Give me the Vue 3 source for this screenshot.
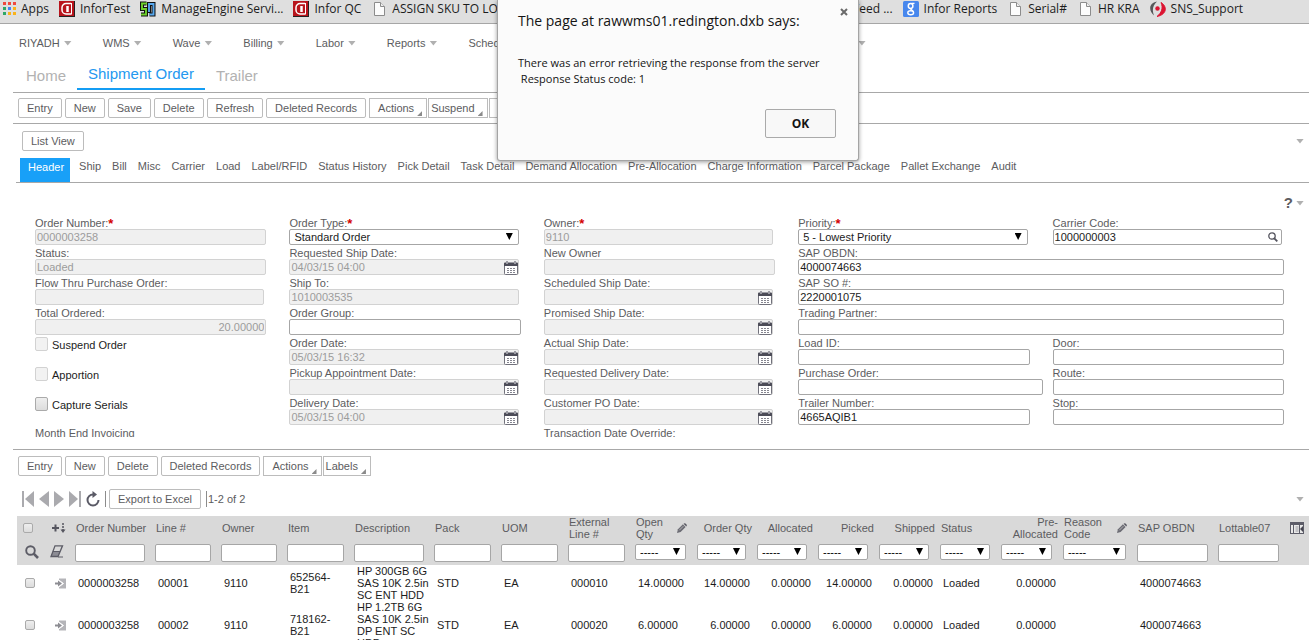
<script setup>
const leftBookmarks = [
  { icon: 'apps', text: 'Apps' },
  { icon: 'infor', text: 'InforTest' },
  { icon: 'engine', text: 'ManageEngine Servi...' },
  { icon: 'infor', text: 'Infor QC' },
  { icon: 'page', text: 'ASSIGN SKU TO LO...' },
]
const rightBookmarks = [
  { icon: 'none', text: 'Feed ...' },
  { icon: 'google', text: 'Infor Reports' },
  { icon: 'page', text: 'Serial#' },
  { icon: 'page', text: 'HR KRA' },
  { icon: 'sns', text: 'SNS_Support' },
]
const appGrid = [
  '#f04a3e', '#f04a3e', '#f04a3e',
  '#2fa866', '#4285f4', '#f9b31b',
  '#2fa866', '#f9b31b', '#f9b31b',
]

const menus = ['RIYADH', 'WMS', 'Wave', 'Billing', 'Labor', 'Reports', 'Scheduler']
const orderTools = ['Entry', 'New', 'Save', 'Delete', 'Refresh', 'Deleted Records']
const lineTools = ['Entry', 'New', 'Delete', 'Deleted Records']
const detailTabs = [
  'Header', 'Ship', 'Bill', 'Misc', 'Carrier', 'Load', 'Label/RFID', 'Status History',
  'Pick Detail', 'Task Detail', 'Demand Allocation', 'Pre-Allocation', 'Charge Information',
  'Parcel Package', 'Pallet Exchange', 'Audit',
]

const fields = [
  { label: 'Order Number:', value: '0000003258', off: true, req: true, pad: true },
  { label: 'Order Type:', value: 'Standard Order', kind: 'select', req: true },
  { label: 'Owner:', value: '9110', off: true, req: true, size: 'short' },
  { label: 'Priority:', value: '5 - Lowest Priority', kind: 'select', req: true },
  { label: 'Carrier Code:', value: '1000000003', kind: 'lookup', size: 'short' },

  { label: 'Status:', value: 'Loaded', off: true },
  { label: 'Requested Ship Date:', value: '04/03/15 04:00', off: true, kind: 'date' },
  { label: 'New Owner', value: '', off: true },
  { label: 'SAP OBDN:', value: '4000074663', span: true },

  { label: 'Flow Thru Purchase Order:', value: '', off: true, size: 'short' },
  { label: 'Ship To:', value: '1010003535', off: true, size: 'short' },
  { label: 'Scheduled Ship Date:', value: '', off: true, kind: 'date' },
  { label: 'SAP SO #:', value: '2220001075', span: true },

  { label: 'Total Ordered:', value: '20.00000', off: true, right: true },
  { label: 'Order Group:', value: '' },
  { label: 'Promised Ship Date:', value: '', off: true, kind: 'date' },
  { label: 'Trading Partner:', value: '', span: true },

  { label: 'Suspend Order', kind: 'check', off: true },
  { label: 'Order Date:', value: '05/03/15 16:32', off: true, kind: 'date' },
  { label: 'Actual Ship Date:', value: '', off: true, kind: 'date' },
  { label: 'Load ID:', value: '' },
  { label: 'Door:', value: '' },

  { label: 'Apportion', kind: 'check', off: true },
  { label: 'Pickup Appointment Date:', value: '', off: true, kind: 'date' },
  { label: 'Requested Delivery Date:', value: '', off: true, kind: 'date' },
  { label: 'Purchase Order:', value: '', size: 'long' },
  { label: 'Route:', value: '' },

  { label: 'Capture Serials', kind: 'check' },
  { label: 'Delivery Date:', value: '05/03/15 04:00', off: true, kind: 'date' },
  { label: 'Customer PO Date:', value: '', off: true, kind: 'date' },
  { label: 'Trailer Number:', value: '4665AQIB1' },
  { label: 'Stop:', value: '' },

  { label: 'Month End Invoicing', value: '' },
  { kind: 'blank' },
  { label: 'Transaction Date Override:', value: '', off: true, kind: 'date' },
]

const columns = [
  { key: 'order', label: 'Order Number', w: 80 },
  { key: 'line', label: 'Line #', w: 66 },
  { key: 'owner', label: 'Owner', w: 66 },
  { key: 'item', label: 'Item', w: 67 },
  { key: 'desc', label: 'Description', w: 80 },
  { key: 'pack', label: 'Pack', w: 67 },
  { key: 'uom', label: 'UOM', w: 67 },
  { key: 'ext', label: 'External\nLine #', w: 67 },
  { key: 'open', label: 'Open\nQty', w: 62, pick: true, edit: true },
  { key: 'qty', label: 'Order Qty', w: 60, pick: true, num: true },
  { key: 'alloc', label: 'Allocated', w: 61, pick: true, num: true },
  { key: 'picked', label: 'Picked', w: 61, pick: true, num: true },
  { key: 'shipped', label: 'Shipped', w: 61, pick: true, num: true },
  { key: 'status', label: 'Status', w: 61, pick: true },
  { key: 'pre', label: 'Pre-\nAllocated', w: 62, pick: true, num: true },
  { key: 'reason', label: 'Reason\nCode', w: 74, pick: true, edit: true },
  { key: 'sap', label: 'SAP OBDN', w: 81 },
  { key: 'lot', label: 'Lottable07', w: 71 },
]
const widths = [29, 28, ...columns.map((c) => c.w), 21]
const total = widths.reduce((a, b) => a + b, 0)

const rows = [
  {
    order: '0000003258', line: '00001', owner: '9110', item: '652564-\nB21',
    desc: 'HP 300GB 6G\nSAS 10K 2.5in\nSC ENT HDD', pack: 'STD', uom: 'EA', ext: '000010',
    open: '14.00000', qty: '14.00000', alloc: '0.00000', picked: '14.00000', shipped: '0.00000',
    status: 'Loaded', pre: '0.00000', reason: '', sap: '4000074663', lot: '',
  },
  {
    order: '0000003258', line: '00002', owner: '9110', item: '718162-\nB21',
    desc: 'HP 1.2TB 6G\nSAS 10K 2.5in\nDP ENT SC\nHDD', pack: 'STD', uom: 'EA', ext: '000020',
    open: '6.00000', qty: '6.00000', alloc: '0.00000', picked: '6.00000', shipped: '0.00000',
    status: 'Loaded', pre: '0.00000', reason: '', sap: '4000074663', lot: '',
  },
]
</script>

<template>
  <div class="screen">
    <nav class="bookmarks" aria-label="Bookmarks">
      <div v-for="(group, g) in [leftBookmarks, rightBookmarks]" :key="g" class="bm-group">
        <a v-for="(b, i) in group" :key="i" href="#" class="bm">
          <svg v-if="b.icon === 'apps'" class="bm-icon apps" viewBox="0 0 13 13">
            <rect v-for="(c, n) in appGrid" :key="n" :x="(n % 3) * 5" :y="Math.floor(n / 3) * 5" width="3" height="3" :fill="c" />
          </svg>
          <svg v-else-if="b.icon === 'infor'" class="bm-icon" viewBox="0 0 16 16">
            <rect width="16" height="16" fill="#222" />
            <rect width="15" height="15" fill="#b8141c" />
            <path d="M12 2.500H7a4 4 0 0 0-4 4v2.500a4 4 0 0 0 4 4h5" fill="none" stroke="#fff" stroke-width="1.500" />
            <path d="M8.500 5v6" stroke="#fff" stroke-width="2.500" />
            <path d="M12.500 2v11.500" stroke="#fff" stroke-width="1" />
          </svg>
          <svg v-else-if="b.icon === 'engine'" class="bm-icon" viewBox="0 0 16 16">
            <path d="M6.500 2.500H2V8h4v5.500H1" fill="none" stroke="#111" stroke-width="4" />
            <path d="M9 12V3h4.500v10.500H9.500" fill="none" stroke="#111" stroke-width="4" />
            <path d="M7 2.500H2V8h4v5.500H1" fill="none" stroke="#6fd02c" stroke-width="1.900" />
            <path d="M9 11V3h4.500v10.500H9.500" fill="none" stroke="#58a8ee" stroke-width="1.900" />
          </svg>
          <svg v-else-if="b.icon === 'page'" class="bm-icon" viewBox="0 0 16 16">
            <path d="M3.500 1.500h6l4 4v9h-10z" fill="#fcfcfc" stroke="#8c8c8c" />
            <path d="M9.500 1.500v4h4" fill="#eee" stroke="#8c8c8c" />
          </svg>
          <svg v-else-if="b.icon === 'google'" class="bm-icon" viewBox="0 0 16 16">
            <rect width="16" height="16" rx="1.500" fill="#4787ed" />
            <ellipse cx="7.600" cy="5" rx="2.300" ry="2.400" fill="none" stroke="#fff" stroke-width="1.500" />
            <path d="M8.500 2.300h3M8.200 7.200c-2 1.200 1.800 1.600 2 3.600" fill="none" stroke="#fff" stroke-width="1.300" />
            <ellipse cx="7.700" cy="11.700" rx="2.900" ry="2" fill="none" stroke="#fff" stroke-width="1.400" />
          </svg>
          <svg v-else-if="b.icon === 'sns'" class="bm-icon" viewBox="0 0 16 16">
            <path d="M7 .500C-1.500 2-1.500 10 4 14.500C1.800 9 2.800 4.500 7 .500z" fill="#55585a" />
            <path d="M11 1.500c6.500 4 6 12-4 14c4.500-3.500 6.500-8.500 4-14z" fill="#dc1432" stroke="#dc1432" />
            <circle cx="7.500" cy="7.500" r="2.200" fill="#dc1432" />
          </svg>
          <span>{{ b.text }}</span>
        </a>
      </div>
    </nav>

    <nav class="menu" aria-label="Main menu">
      <button v-for="m in menus" :key="m" type="button">{{ m }}<i class="caret"></i></button>
      <button type="button" class="menu-more" aria-label="More"><i class="caret"></i></button>
    </nav>

    <main class="page">
      <nav class="tabs" aria-label="Screens">
        <a href="#">Home</a>
        <a href="#" class="on">Shipment Order</a>
        <a href="#">Trailer</a>
      </nav>

      <div class="toolbar">
        <button v-for="t in orderTools" :key="t" type="button" class="btn">{{ t }}</button>
        <div class="drops">
          <button type="button" class="drop">Actions<i></i></button>
          <button type="button" class="drop">Suspend<i></i></button>
          <button type="button" class="drop last">Print<i></i></button>
        </div>
      </div>

      <div class="view-row">
        <button type="button" class="btn">List View</button>
        <i class="caret"></i>
      </div>

      <nav class="detail-tabs" aria-label="Order details">
        <a v-for="(t, i) in detailTabs" :key="t" href="#" :class="{ on: i === 0 }">{{ t }}</a>
      </nav>

      <div class="help"><b>?</b><i class="caret"></i></div>

      <form class="form" @submit.prevent>
        <div v-for="(f, i) in fields" :key="i" class="field" :class="[f.kind, f.size, { span: f.span }]">
          <template v-if="f.kind === 'check'">
            <input :id="'f' + i" type="checkbox" class="big" :disabled="f.off" />
            <label :for="'f' + i">{{ f.label }}</label>
          </template>
          <template v-else-if="f.kind !== 'blank'">
            <label :for="'f' + i">{{ f.label }}<sup v-if="f.req">*</sup></label>
            <div class="control">
              <select v-if="f.kind === 'select'" :id="'f' + i"><option>{{ f.value }}</option></select>
              <input v-else :id="'f' + i" type="text" :value="f.value" :disabled="f.off" :class="{ right: f.right }" />
              <svg v-if="f.kind === 'date'" class="cal" viewBox="0 0 14 14">
                <path d="M.500 4v8.500a1 1 0 0 0 1 1h11a1 1 0 0 0 1-1V4" fill="#fff" stroke="#71717b" />
                <path d="M0 5V2.500a1 1 0 0 1 1-1h12a1 1 0 0 1 1 1V5z" fill="#4c4c58" />
                <path d="M3 0v3M11 0v3M7 1v1" stroke="#9c9ca4" stroke-width="2" />
                <path d="M3 7.500h8M3 9.500h8M3 11.500h8" stroke="#85858f" stroke-width="1" stroke-dasharray="2 1" />
              </svg>
              <svg v-if="f.kind === 'lookup'" class="glass" viewBox="0 0 10 10">
                <circle cx="4" cy="4" r="3.200" fill="none" stroke="#55555f" stroke-width="1.300" />
                <path d="M6.300 6.300L9.300 9.300" stroke="#55555f" stroke-width="1.900" />
              </svg>
            </div>
          </template>
        </div>
      </form>

      <section class="lines">
        <div class="toolbar">
          <button v-for="t in lineTools" :key="t" type="button" class="btn">{{ t }}</button>
          <div class="drops">
            <button type="button" class="drop">Actions<i></i></button>
            <button type="button" class="drop">Labels<i></i></button>
          </div>
        </div>

        <div class="pager">
          <button type="button" aria-label="First"><svg width="12" height="16" viewBox="0 0 12 16"><path d="M1 0v16" stroke="#aaaaae" stroke-width="2" /><path d="M12 0v16L3 8z" fill="#aaaaae" /></svg></button>
          <button type="button" aria-label="Previous"><svg width="10" height="16" viewBox="0 0 10 16"><path d="M10 0v16L0 8z" fill="#aaaaae" /></svg></button>
          <button type="button" aria-label="Next"><svg width="10" height="16" viewBox="0 0 10 16"><path d="M0 0v16L10 8z" fill="#aaaaae" /></svg></button>
          <button type="button" aria-label="Last"><svg width="12" height="16" viewBox="0 0 12 16"><path d="M11 0v16" stroke="#aaaaae" stroke-width="2" /><path d="M0 0v16L9 8z" fill="#aaaaae" /></svg></button>
          <button type="button" aria-label="Refresh">
            <svg width="14" height="16" viewBox="0 0 14 16"><path d="M7 3.500A5.500 5.500 0 1 0 12.500 9" fill="none" stroke="#5a5a66" stroke-width="2" /><path d="M6.500 0L11 3.500L6.500 7z" fill="#5a5a66" /></svg>
          </button>
          <span class="bar"></span>
          <button type="button" class="btn">Export to Excel</button>
          <span class="bar"></span>
          <span class="count">1-2 of 2</span>
          <i class="caret"></i>
        </div>

        <table>
          <colgroup>
            <col v-for="(w, i) in widths" :key="i" :style="{ width: (w / total) * 100 + '%' }" />
          </colgroup>
          <thead>
            <tr class="titles">
              <th class="pick-all"><input type="checkbox" class="small" aria-label="Select all lines" /></th>
              <th class="sort">
                <svg width="14" height="12" viewBox="0 0 14 12"><path d="M0 6h7M3.500 2.500v7" stroke="#55555f" stroke-width="2" /><path d="M11 1v8" stroke="#55555f" stroke-width="1.500" stroke-dasharray="2 1" /><path d="M8.500 7.500h5L11 11z" fill="#55555f" /></svg>
              </th>
              <th v-for="c in columns" :key="c.key" :class="{ num: c.num }">
                <div class="title"><span>{{ c.label }}</span>
                  <svg v-if="c.edit" class="pencil" viewBox="0 0 11 11"><path d="M0 11l1-4L6.500 1.500 9.500 4.500 4 10z" fill="#6c6c74" /><path d="M7.200.800Q8.500-.300 10 1t.300 2.800z" fill="#55555f" /><path d="M2.500 8L7 3.500" stroke="#b8b8bc" /></svg>
                </div>
              </th>
              <th class="config">
                <svg width="14" height="12" viewBox="0 0 14 12"><rect x=".500" y=".500" width="13" height="11" fill="#e8e8e8" stroke="#5c5c68" /><path d="M0 1.500h14" stroke="#5c5c68" stroke-width="3" /><path d="M3.500 3v9M9.500 3v9" stroke="#5c5c68" /><path d="M5.500 5h3M5.500 7h3M5.500 9h3" stroke="#9a9aa2" /><path d="M13 4v6L10 7z" fill="#44444f" /></svg>
              </th>
            </tr>
            <tr class="filters">
              <th class="search">
                <svg width="14" height="14" viewBox="0 0 14 14"><circle cx="5.500" cy="5.500" r="4.300" fill="none" stroke="#5c5c66" stroke-width="1.900" /><path d="M8.700 8.700L13 13" stroke="#5c5c66" stroke-width="2.600" /></svg>
              </th>
              <th class="clear">
                <svg width="14" height="13" viewBox="0 0 14 13"><path d="M2.800 6.500h7.200L8 11.500H1z" fill="#8c8c94" /><path d="M5 .800h7.500L8 11.500H1z" fill="none" stroke="#5c5c66" stroke-width="1.300" /><path d="M3 6.500h7" stroke="#5c5c66" /><path d="M8 12h5" stroke="#5c5c66" /></svg>
              </th>
              <th v-for="c in columns" :key="c.key">
                <div v-if="c.pick" class="pick"><select :aria-label="c.label"><option>-----</option></select></div>
                <input v-else type="text" :aria-label="c.label" />
              </th>
              <th></th>
            </tr>
          </thead>
          <tbody>
            <tr v-for="(r, i) in rows" :key="i">
              <td class="tick"><input type="checkbox" class="small" :aria-label="'Select line ' + r.line" /></td>
              <td class="open">
                <svg width="11" height="11" viewBox="0 0 11 11"><path d="M4 .500h7v10H4z" fill="#b4b4b8" /><path d="M3 1.500L8.500 5.500L3 9.500z" fill="#fff" stroke="#fff" /><path d="M0 5.500h4" stroke="#8c8c92" stroke-width="2" /><path d="M3 2.500l4 3L3 8.500z" fill="#8c8c92" /></svg>
              </td>
              <td v-for="c in columns" :key="c.key" :class="{ num: c.num }">{{ r[c.key] }}</td>
              <td></td>
            </tr>
          </tbody>
        </table>
      </section>
    </main>

    <div class="dialog" role="alertdialog" aria-labelledby="dlg-title">
      <button type="button" class="close" aria-label="Close">
        <svg width="8" height="8" viewBox="0 0 8 8"><path d="M1 1l6 6M7 1L1 7" stroke="#6a6a6a" stroke-width="2" /></svg>
      </button>
      <h2 id="dlg-title">The page at rawwms01.redington.dxb says:</h2>
      <p>There was an error retrieving the response from the server<br />&nbsp;Response Status code: 1</p>
      <button type="button" class="ok">OK</button>
    </div>
  </div>
</template>

<style>
body { background: #fff; }
</style>

<style scoped>
* { box-sizing: border-box; }
.screen {
  position: relative;
  height: 100vh;
  overflow: hidden;
  font: 11px/12px "Liberation Sans", Arial, sans-serif;
  color: #5c5c60;
}
button, input, select { font: inherit; color: inherit; margin: 0; }
button { background: none; border: 0; padding: 0; }
a { color: inherit; text-decoration: none; }
svg { display: block; flex: none; }

.bookmarks {
  display: flex;
  height: 24px;
  padding: 0 3px 6px;
  background: #dfdfdf;
  border-bottom: 1px solid #a6a6a6;
  font: 12px/16px "Open Sans", "Noto Sans", sans-serif;
  color: #1c1c1c;
}
.bm-group { display: flex; align-items: center; gap: 10px; flex: 0 0 850px; }
.bm { display: flex; align-items: center; gap: 5px; white-space: nowrap; }
.bm-icon { width: 16px; height: 16px; }
.apps { width: 13px; height: 13px; }

.menu { display: flex; align-items: center; gap: 31px; height: 38px; padding-left: 19px; }
.menu button { display: flex; align-items: center; gap: 4px; }
.menu .menu-more { margin-left: 297px; }
.caret { display: block; width: 8px; height: 5px; background: #b0b0b0; clip-path: polygon(0 0, 100% 0, 50% 100%); }

.page { margin-left: 13px; }
.tabs { display: flex; height: 31px; padding-left: 2px; border-bottom: 1px solid #a8a8a8; font-size: 15px; line-height: 28px; color: #b2b2b2; }
.tabs a { height: 28px; padding: 0 11px; }
.tabs a.on { line-height: 24px; color: #2498f0; border-bottom: 2px solid #149df4; }

.toolbar { display: flex; align-items: center; gap: 3px; height: 31px; padding-left: 5px; border-bottom: 1px solid #a8a8a8; }
.btn { height: 20px; padding: 0 8px; border: 1px solid #bcbcbc; border-radius: 2px; background: #fff; white-space: nowrap; }
.drops { display: flex; gap: 1px; }
.drop { display: flex; gap: 3px; height: 20px; padding: 0 4px 0 8px; border: 1px solid #bcbcbc; background: #fff; line-height: 18px; }
.drop + .drop { padding-left: 2px; }
.drop + .drop.last { padding-left: 10px; }
.drop i { width: 5px; height: 5px; margin-top: 12px; background: #8a8a8a; clip-path: polygon(100% 0, 100% 100%, 0 100%); }

.view-row { display: flex; align-items: center; justify-content: space-between; height: 34px; padding: 0 5px 0 9px; }
.detail-tabs { display: flex; height: 25px; margin-left: 3px; padding-left: 4px; border-bottom: 1px solid #a8a8a8; gap: 11px; line-height: 17px; white-space: nowrap; }
.detail-tabs a.on { height: 24px; padding: 0 6px 0 8px; margin-right: -2px; background: #18a0f8; color: #fff; line-height: 19px; }

.help { display: flex; justify-content: flex-end; align-items: center; gap: 3px; height: 33px; padding: 7px 5px 0 0; font-size: 15px; }

.form {
  display: grid;
  grid-template-columns: repeat(5, minmax(0, 1fr));
  grid-auto-rows: 30px;
  height: 221px;
  margin-bottom: 12px;
  padding: 0 2px 0 22px;
  overflow: hidden;
}
.field { padding-right: 23px; white-space: nowrap; }
.field.short, .field.select, .field.date { padding-right: 25px; }
.field.long { padding-right: 10px; }
.field.span { grid-column: span 2; }
.field label { display: block; height: 13px; line-height: 15px; }
.field sup { color: #d40000; font-size: 13px; font-weight: bold; line-height: 0; vertical-align: -1px; }
.control { position: relative; }
.control input, .control select { display: block; width: 100%; height: 16px; padding: 0 1px; border: 1px solid #a6a6a6; border-radius: 2px; background: #fff; color: #1c1c1c; appearance: none; outline: 0; }
.control select { padding-left: 4px; }
.control input:disabled { background: #f0f0f0; border-color: #d2d2d2; color: #9c9c9c; }
.control .right { text-align: right; }
.cal { position: absolute; right: 1px; top: 2px; width: 14px; height: 14px; }
.glass { position: absolute; right: 4px; top: 3px; width: 10px; height: 10px; }
.select .control::after, .pick::after {
  content: ""; position: absolute; right: 6px; top: 4px; width: 7px; height: 7px;
  background: #000; clip-path: polygon(0 0, 100% 0, 50% 100%); pointer-events: none;
}
.field.check { display: flex; gap: 4px; padding-top: 1px; color: #1c1c1c; }
.field.check label { line-height: 17px; }
input[type="checkbox"] { appearance: none; flex: none; border: 1px solid #aaa; border-radius: 2px; background: linear-gradient(#eee, #dcdcdc); }
.big { width: 13px; height: 14px; }
.big:disabled { border-color: #d2d2d2; background: #f2f2f2; }

.lines { border-top: 1px solid #a8a8a8; }
.lines .toolbar { border: 0; height: 32px; }
.pager { display: flex; align-items: center; height: 34px; gap: 5px; padding: 0 5px 0 9px; }
.pager .btn { margin-left: -2px; }
.bar { width: 1px; height: 16px; background: #8c8c8c; }
.count { margin-left: -4px; }
.pager .caret { margin-left: auto; }

table { width: calc(100% - 4px); margin-left: 4px; border-collapse: collapse; table-layout: fixed; }
th { padding: 0; font-weight: normal; text-align: left; }
thead { background: #d9d9d9; }
.titles { height: 24px; }
.titles th { padding: 0 0 0 2px; }
.titles .num { text-align: right; padding-right: 4px; }
.title { display: flex; align-items: center; justify-content: space-between; padding-right: 9px; }
.title span { white-space: pre; }
.num .title { display: block; padding: 0; }
.pencil { width: 10px; height: 10px; }
.titles .pick-all { padding-left: 6px; }
.titles .sort { padding-left: 6px; }
.filters { height: 25px; }
.filters th { vertical-align: top; padding: 4px 0 0 1px; }
.filters .search { padding: 5px 0 0 8px; }
.filters .clear { padding: 5px 0 0 4px; }
.filters input { display: block; width: calc(100% - 9px); height: 18px; border: 1px solid #a6a6a6; border-radius: 2px; background: #fff; }
.pick { position: relative; width: calc(100% - 10px); }
.pick select { display: block; width: 100%; height: 16px; padding: 0 4px; border: 1px solid #a6a6a6; border-radius: 2px; background: #fff; color: #000; appearance: none; }
.small { display: block; width: 10px; height: 10px; }
td { padding: 0 0 0 4px; color: #1c1c1c; vertical-align: middle; white-space: pre-line; }
td.num { padding: 0 6px 0 0; text-align: right; }
td.tick { padding-left: 8px; }
td.open { padding-left: 9px; }

.dialog {
  position: absolute;
  left: 497px;
  top: 0;
  width: 362px;
  height: 161px;
  padding: 11px 20px;
  background: #fbfbfb;
  border: 1px solid #a4a4a4;
  border-top: 0;
  border-radius: 0 0 3px 3px;
  box-shadow: 0 1px 4px rgba(0, 0, 0, 0.4);
  font: 11px/16px "Open Sans", "Noto Sans", sans-serif;
  color: #141414;
  white-space: nowrap;
}
.dialog h2 { margin: 0 0 24px; font-size: 14px; line-height: 20px; font-weight: normal; }
.dialog p { margin: 0; }
.close { position: absolute; right: 10px; top: 8px; }
.ok { position: absolute; right: 22px; bottom: 22px; width: 71px; height: 29px; border: 1px solid #aaa; border-radius: 2px; background: #f8f8f8; font-weight: bold; font-size: 12px; }
</style>
